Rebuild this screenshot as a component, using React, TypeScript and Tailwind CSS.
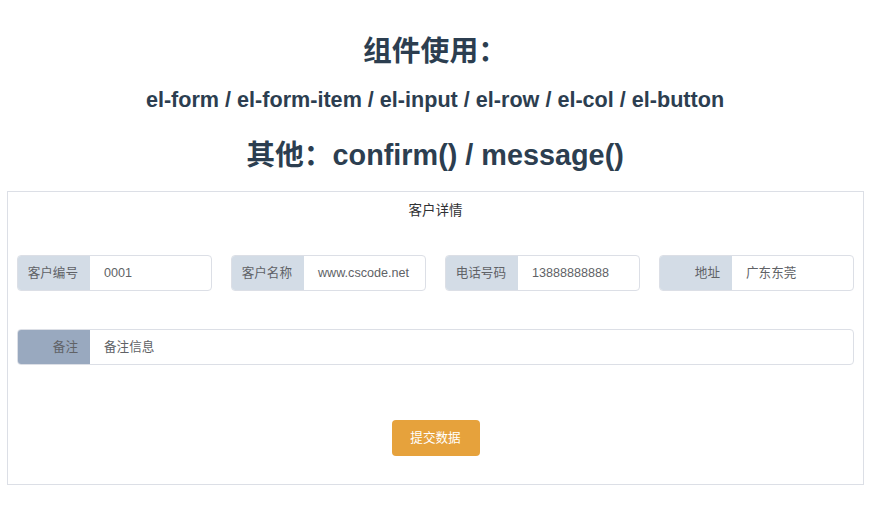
const FONT = '[font-family:"Liberation_Sans","Noto_Sans_CJK_SC",sans-serif]';

type Field = { label: string; value: string };

const ROW: Field[] = [
  { label: '客户编号', value: '0001' },
  { label: '客户名称', value: 'www.cscode.net' },
  { label: '电话号码', value: '13888888888' },
  { label: '地址', value: '广东东莞' },
];

function InputGroup({ label, value, labelBg }: Field & { labelBg: string }) {
  return (
    <div className="flex h-9 overflow-hidden rounded-[4px] border border-[#dcdfe6] bg-white">
      <div className={`flex w-[72px] shrink-0 items-center justify-end pr-3 text-[12.6px] text-[#606266] ${labelBg}`}>{label}</div>
      <div className="flex min-w-0 flex-1 items-center px-[14px] text-[12.6px] text-[#606266]">{value}</div>
    </div>
  );
}

export default function App() {
  return (
    <div className={`min-h-[512px] bg-white text-[#2c3e50] ${FONT}`}>
      <div className="pt-[33px] text-center">
        <div className="text-[28.8px] font-bold leading-[36px]">组件使用：</div>
        <div className="mt-[17px] text-[21.6px] font-bold leading-[28px]">el-form / el-form-item / el-input / el-row / el-col / el-button</div>
        <div className="mt-[23px] text-[28.8px] font-bold leading-[36px]">其他：confirm() / message()</div>
      </div>

      <div className="mt-[18px] ml-[7px] mr-[6px] border border-[#dcdfe6] px-[9px] pt-[9px] pb-[28px]">
        <div className="text-center text-[13.5px] leading-[20px] text-[#303133]">客户详情</div>

        <div className="mt-[34px] grid grid-cols-4 gap-[19px]">
          {ROW.map((f) => (
            <InputGroup key={f.label} label={f.label} value={f.value} labelBg="bg-[#d3dce6]" />
          ))}
        </div>

        <div className="mt-[38px]">
          <InputGroup label="备注" value="备注信息" labelBg="bg-[#99a9bf]" />
        </div>

        <div className="mt-[55px] flex justify-center">
          <button className="h-9 w-[88px] rounded-[4px] bg-[#e6a23c] text-[12.6px] text-white">提交数据</button>
        </div>
      </div>
    </div>
  );
}
